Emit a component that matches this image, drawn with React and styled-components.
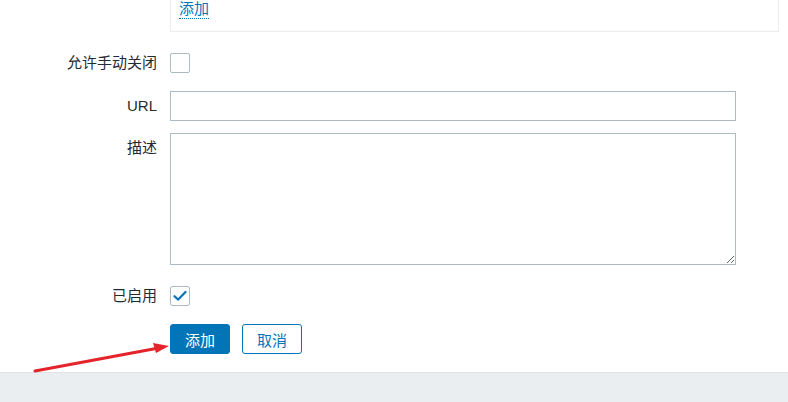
import React from 'react'
import styled, { createGlobalStyle } from 'styled-components'

const GlobalStyle = createGlobalStyle`
  html, body {
    margin: 0;
    padding: 0;
    background: #fff;
  }
  body {
    font-family: "Liberation Sans", Arial, "Noto Sans CJK SC", sans-serif;
    font-size: 15px;
    color: #1f2c33;
    overflow: hidden;
  }
`

const CheckIcon = () =>
  <svg width="14" height="12" viewBox="0 0 14 12">
    <path d="M1.5 6.2 L5.2 9.6 L12.5 2" fill="none" stroke="#0275b8" strokeWidth="2.2" strokeLinecap="round" strokeLinejoin="round" />
  </svg>

const Arrow = () =>
  <StyledArrow viewBox="0 0 788 402" width="788" height="402">
    <line x1="35" y1="371" x2="156" y2="348.5" stroke="#e5232b" strokeWidth="3" strokeLinecap="round" />
    <polygon points="169,346 153,343 156,353" fill="#e5232b" />
  </StyledArrow>

export default () =>
  <>
    <GlobalStyle />
    <StyledPage>
      <StyledForm>
        <StyledRow>
          <span />
          <StyledBox>
            <StyledLink>添加</StyledLink>
          </StyledBox>
        </StyledRow>
        <StyledRow $top={21}>
          <StyledLabel $line={20}>允许手动关闭</StyledLabel>
          <StyledCheckbox />
        </StyledRow>
        <StyledRow $top={18}>
          <StyledLabel $line={29}>URL</StyledLabel>
          <StyledInput />
        </StyledRow>
        <StyledRow $top={12}>
          <StyledLabel $line={29}>描述</StyledLabel>
          <StyledTextarea />
        </StyledRow>
        <StyledRow $top={21}>
          <StyledLabel $line={20}>已启用</StyledLabel>
          <StyledCheckbox><CheckIcon /></StyledCheckbox>
        </StyledRow>
        <StyledRow $top={18}>
          <span />
          <StyledButtons>
            <StyledButton $primary>添加</StyledButton>
            <StyledButton>取消</StyledButton>
          </StyledButtons>
        </StyledRow>
      </StyledForm>
      <StyledFooter />
      <Arrow />
    </StyledPage>
  </>

const StyledPage = styled.div`
  position: relative;
  width: 788px;
  height: 402px;
  overflow: hidden;
  display: flex;
  flex-direction: column;
`

const StyledForm = styled.div`
  flex: 1;
  margin-top: -13px;
`

const StyledRow = styled.div`
  display: grid;
  grid-template-columns: 157px 1fr;
  column-gap: 13px;
  align-items: start;
  margin-top: ${({ $top }) => $top || 0}px;
`

const StyledLabel = styled.label`
  text-align: right;
  line-height: ${({ $line }) => $line}px;
  white-space: nowrap;
`

const StyledBox = styled.div`
  width: 609px;
  box-sizing: border-box;
  border: 1px solid #ebeef0;
  padding: 12px 8px 12px;
`

const StyledLink = styled.span`
  color: #0275b8;
  line-height: 18px;
  display: inline-block;
  border-bottom: 1px dotted #0275b8;
`

const StyledCheckbox = styled.div`
  width: 20px;
  height: 20px;
  box-sizing: border-box;
  border: 1px solid #acbbc2;
  border-radius: 2px;
  background: #fff;
  display: flex;
  align-items: center;
  justify-content: center;
`

const StyledInput = styled.input`
  width: 566px;
  height: 30px;
  box-sizing: border-box;
  border: 1px solid #acbbc2;
  margin: 0;
  padding: 0 6px;
  font: inherit;
  outline: none;
`

const StyledTextarea = styled.textarea`
  width: 566px;
  height: 132px;
  box-sizing: border-box;
  border: 1px solid #acbbc2;
  margin: 0;
  padding: 4px 6px;
  font: inherit;
  outline: none;
  display: block;
  resize: both;
`

const StyledButtons = styled.div`
  display: flex;
  gap: 12px;
`

const StyledButton = styled.button`
  width: 60px;
  height: 30px;
  box-sizing: border-box;
  border: 1px solid #0275b8;
  border-radius: 3px;
  margin: 0;
  padding: 0;
  font: inherit;
  background: ${({ $primary }) => $primary ? '#0275b8' : '#fff'};
  color: ${({ $primary }) => $primary ? '#fff' : '#0275b8'};
`

const StyledFooter = styled.div`
  height: 29px;
  flex: none;
  background: #ebeef0;
  border-top: 1px solid #dfe4e7;
`

const StyledArrow = styled.svg`
  position: absolute;
  left: 0;
  top: 0;
  pointer-events: none;
`
